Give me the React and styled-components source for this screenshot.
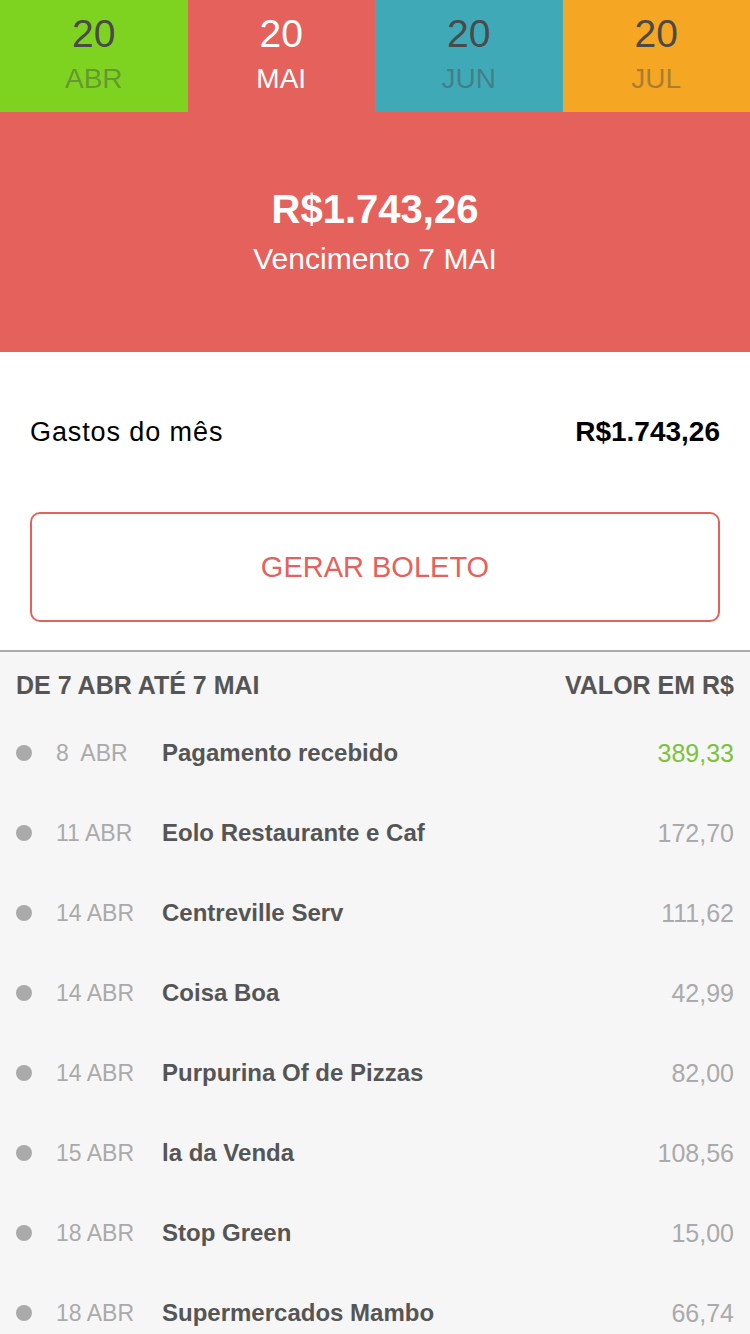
import React from "react";
import styled, { createGlobalStyle } from "styled-components";

const GlobalStyle = createGlobalStyle`
  html, body {
    margin: 0;
    padding: 0;
    background: #f6f6f6;
  }
  body {
    font-family: "Liberation Sans", Arial, sans-serif;
  }
  * {
    box-sizing: border-box;
  }
`;

const months = [
  { day: "20", name: "ABR", bg: "#7ed321", active: false },
  { day: "20", name: "MAI", bg: "#e5625c", active: true },
  { day: "20", name: "JUN", bg: "#3fa9b8", active: false },
  { day: "20", name: "JUL", bg: "#f5a623", active: false },
];

const items = [
  { day: "8", month: "ABR", name: "Pagamento recebido", value: "389,33", credit: true },
  { day: "11", month: "ABR", name: "Eolo Restaurante e Caf", value: "172,70" },
  { day: "14", month: "ABR", name: "Centreville Serv", value: "111,62" },
  { day: "14", month: "ABR", name: "Coisa Boa", value: "42,99" },
  { day: "14", month: "ABR", name: "Purpurina Of de Pizzas", value: "82,00" },
  { day: "15", month: "ABR", name: "la da Venda", value: "108,56" },
  { day: "18", month: "ABR", name: "Stop Green", value: "15,00" },
  { day: "18", month: "ABR", name: "Supermercados Mambo", value: "66,74" },
];

const App = () => {
  return (
    <Page>
      <GlobalStyle />
      <Tabs>
        {months.map((m) => (
          <Tab key={m.name} bg={m.bg} active={m.active}>
            <TabDay>{m.day}</TabDay>
            <TabMonth>{m.name}</TabMonth>
          </Tab>
        ))}
      </Tabs>

      <Banner>
        <Amount>R$1.743,26</Amount>
        <Due>Vencimento 7 MAI</Due>
      </Banner>

      <Summary>
        <SummaryRow>
          <span>Gastos do mês</span>
          <strong>R$1.743,26</strong>
        </SummaryRow>
        <OutlineButton>GERAR BOLETO</OutlineButton>
      </Summary>

      <List>
        <ListHeader>
          <span>DE 7 ABR ATÉ 7 MAI</span>
          <span>VALOR EM R$</span>
        </ListHeader>
        {items.map((it, i) => (
          <Row key={i}>
            <Dot />
            <DateText>
              {it.day.length === 1 ? `${it.day}\u00a0 ${it.month}` : `${it.day} ${it.month}`}
            </DateText>
            <Name>{it.name}</Name>
            <Value credit={it.credit}>{it.value}</Value>
          </Row>
        ))}
      </List>
    </Page>
  );
};

export default App;

const Page = styled.div`
  width: 750px;
  min-height: 1334px;
  background: #f6f6f6;
`;

const Tabs = styled.div`
  display: grid;
  grid-template-columns: repeat(4, 1fr);
  height: 112px;
`;

const Tab = styled.div`
  background: ${(p) => p.bg};
  display: flex;
  flex-direction: column;
  align-items: center;
  color: ${(p) => (p.active ? "#ffffff" : "#4a4a4a")};
  padding-top: 13px;

  span:last-child {
    color: ${(p) => (p.active ? "#ffffff" : "rgba(74, 74, 74, 0.45)")};
  }
`;

const TabDay = styled.span`
  font-size: 39px;
  line-height: 42px;
`;

const TabMonth = styled.span`
  font-size: 28px;
  line-height: 32px;
  margin-top: 8px;
`;

const Banner = styled.div`
  background: #e5625c;
  height: 240px;
  display: flex;
  flex-direction: column;
  align-items: center;
  justify-content: center;
  color: #fff;
`;

const Amount = styled.div`
  font-size: 40px;
  font-weight: bold;
  line-height: 44px;
`;

const Due = styled.div`
  font-size: 30px;
  line-height: 36px;
  margin-top: 10px;
`;

const Summary = styled.div`
  background: #fff;
  padding: 0 30px 30px;
  height: 300px;
  border-bottom: 2px solid #aaaaaa;
`;

const SummaryRow = styled.div`
  display: flex;
  justify-content: space-between;
  align-items: center;
  height: 160px;
  font-size: 27px;
  color: #000;

  span {
    letter-spacing: 0.9px;
  }

  strong {
    font-size: 28px;
    font-weight: bold;
  }
`;

const OutlineButton = styled.button`
  display: block;
  width: 100%;
  height: 110px;
  background: #fff;
  border: 2px solid #e5625c;
  border-radius: 10px;
  color: #e5625c;
  font-family: "Liberation Sans", Arial, sans-serif;
  font-size: 29px;
  cursor: pointer;
`;

const List = styled.div`
  background: #f6f6f6;
  padding: 0 16px;
`;

const ListHeader = styled.div`
  display: flex;
  justify-content: space-between;
  align-items: center;
  height: 61px;
  padding-top: 6px;
  font-size: 25px;
  font-weight: bold;
  color: #555555;
`;

const Row = styled.div`
  display: flex;
  align-items: center;
  height: 80px;
`;

const Dot = styled.span`
  width: 16px;
  height: 16px;
  border-radius: 50%;
  background: #aaaaaa;
  flex: none;
`;

const DateText = styled.span`
  width: 106px;
  margin-left: 24px;
  font-size: 23px;
  color: #aaaaaa;
  white-space: pre;
  flex: none;
`;

const Name = styled.span`
  flex: 1;
  font-size: 24px;
  font-weight: bold;
  color: #555555;
`;

const Value = styled.span`
  font-size: 25px;
  color: ${(p) => (p.credit ? "#7ec13f" : "#aaaaaa")};
`;
